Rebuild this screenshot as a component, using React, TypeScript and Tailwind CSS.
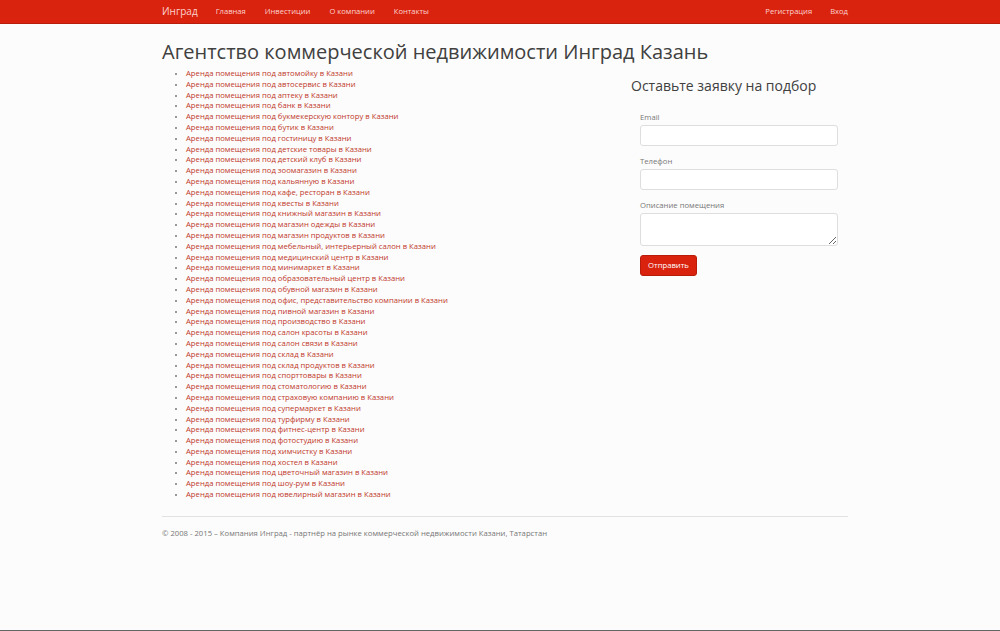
import React from 'react';

const items = [
  'автомойку',
  'автосервис',
  'аптеку',
  'банк',
  'букмекерскую контору',
  'бутик',
  'гостиницу',
  'детские товары',
  'детский клуб',
  'зоомагазин',
  'кальянную',
  'кафе, ресторан',
  'квесты',
  'книжный магазин',
  'магазин одежды',
  'магазин продуктов',
  'мебельный, интерьерный салон',
  'медицинский центр',
  'минимаркет',
  'образовательный центр',
  'обувной магазин',
  'офис, представительство компании',
  'пивной магазин',
  'производство',
  'салон красоты',
  'салон связи',
  'склад',
  'склад продуктов',
  'спорттовары',
  'стоматологию',
  'страховую компанию',
  'супермаркет',
  'турфирму',
  'фитнес-центр',
  'фотостудию',
  'химчистку',
  'хостел',
  'цветочный магазин',
  'шоу-рум',
  'ювелирный магазин',
];

const Field = ({ label, area }: { label: string; area?: boolean }) => (
  <div className="mb-[9px]">
    <label className="block text-[7.7px] leading-[12px] text-[#777] mb-[2px]">{label}</label>
    {area ? (
      <textarea className="block w-[198px] h-[33px] bg-white border border-[#dedede] rounded-[3px] resize-y" />
    ) : (
      <input type="text" className="block w-[198px] h-[21px] bg-white border border-[#dedede] rounded-[3px]" />
    )}
  </div>
);

const App = () => {
  return (
    <div className="min-h-screen flex flex-col bg-[#fcfcfc] font-['Open_Sans',sans-serif]">
      <nav className="h-[24px] bg-[#d9230f] border-b border-[#b81d0c]">
        <div className="ml-[162px] w-[686px] h-full flex items-center">
          <span className="text-[10px] text-[#fbd2cd] mr-[18px]">Инград</span>
          <div className="flex gap-[19px] text-[7.6px] text-[#fbd2cd]">
            <a>Главная</a>
            <a>Инвестиции</a>
            <a>О компании</a>
            <a>Контакты</a>
          </div>
          <div className="ml-auto flex gap-[18px] text-[7.6px] text-[#fbd2cd]">
            <a>Регистрация</a>
            <a>Вход</a>
          </div>
        </div>
      </nav>

      <div className="ml-[162px] w-[686px] flex-1">
        <h1 className="mt-[14px] text-[20px] leading-[28px] text-[#404040] font-normal">
          Агентство коммерческой недвижимости Инград Казань
        </h1>
        <div className="flex mt-[2px]">
          <ul className="list-disc pl-[24px] w-[460px] text-[7.7px] leading-[10.8px] text-[#777] marker:text-[7px]">
            {items.map((item) => (
              <li key={item}>
                <a className="text-[#c0392b]">Аренда помещения под {item} в Казани</a>
              </li>
            ))}
          </ul>
          <div className="ml-[9px] flex-1">
            <h3 className="mt-[8px] text-[14px] leading-[20px] text-[#404040]">Оставьте заявку на подбор</h3>
            <form className="ml-[9px] mt-[15px]">
              <Field label="Email" />
              <Field label="Телефон" />
              <Field label="Описание помещения" area />
              <button
                type="button"
                className="block w-[57px] h-[21px] bg-[#d9230f] border border-[#b81d0c] rounded-[3px] text-white text-[7.7px]"
              >
                Отправить
              </button>
            </form>
          </div>
        </div>
        <hr className="mt-[16px] border-t border-[#e2e2e2]" />
        <p className="mt-[10px] text-[7.7px] leading-[12px] text-[#777]">
          © 2008 - 2015 – Компания Инград - партнёр на рынке коммерческой недвижимости Казани, Татарстан
        </p>
      </div>
      <div className="h-px bg-[#666]" />
    </div>
  );
};

export default App;
